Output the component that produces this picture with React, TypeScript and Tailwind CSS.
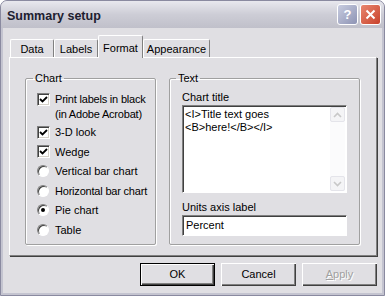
import React from 'react';

const tabs = ['Data', 'Labels', 'Format', 'Appearance'];
const tabWidths: Record<string, string> = {
    Data: 'w-[44px]',
    Labels: 'w-[44px]',
    Format: 'w-[45px]',
    Appearance: 'w-[67px]',
};

const Check = () => (
    <span className="w-[13px] h-[13px] shrink-0 bg-white border border-t-[#808080] border-l-[#808080] border-b-white border-r-white shadow-[inset_1px_1px_0_#404040,inset_-1px_-1px_0_#d4d0c8] flex items-center justify-center">
        <svg width="9" height="9" viewBox="0 0 9 9">
            <path d="M1 4 L3.5 6.5 L8 2" stroke="#000" strokeWidth="1.8" fill="none" />
        </svg>
    </span>
);

const Radio = ({ on }: { on?: boolean }) => (
    <span className="w-[12px] h-[12px] shrink-0 rounded-full bg-white border border-t-[#808080] border-l-[#808080] border-b-white border-r-white shadow-[inset_1px_1px_0_#404040] flex items-center justify-center">
        {on && <span className="w-[4px] h-[4px] rounded-full bg-black" />}
    </span>
);

const ScrollArrow = ({ up }: { up?: boolean }) => (
    <div className="h-[15px] w-[15px] bg-[#f4f4f6] border border-[#e4e4ea] rounded-[2px] flex items-center justify-center">
        <svg width="9" height="6" viewBox="0 0 9 6">
            <path d={up ? 'M1 5 L4.5 1.5 L8 5' : 'M1 1 L4.5 4.5 L8 1'} stroke="#c8c8c8" strokeWidth="1.6" fill="none" />
        </svg>
    </div>
);

const Button = ({ label, primary, disabled }: { label: React.ReactNode; primary?: boolean; disabled?: boolean }) => (
    <div
        className={`w-[75px] h-[23px] flex items-center justify-center bg-[#e0dfe3] ${
            primary
                ? 'border border-black shadow-[inset_1px_1px_0_#fff,inset_-1px_-1px_0_#404040,inset_-2px_-2px_0_#808080]'
                : 'shadow-[inset_1px_1px_0_#fff,inset_-1px_-1px_0_#404040,inset_-2px_-2px_0_#808080]'
        } ${disabled ? 'text-[#a0a0a0] [text-shadow:1px_1px_0_#fff]' : 'text-black'}`}
    >
        {label}
    </div>
);

export default function App() {
    return (
        <div className="w-[385px] h-[296px] flex flex-col bg-[#c4c4d0] border border-[#8a8aa0] rounded-t-[7px] overflow-hidden font-['Liberation_Sans',Arial,sans-serif] text-[11px] text-black">
            {/* Title bar */}
            <div className="h-[27px] shrink-0 flex items-center pl-[6px] pr-[3px] bg-gradient-to-b from-[#e8e8ee] via-[#cdcdd6] to-[#c0c0ca]">
                <span className="font-bold text-[12.5px] text-[#202030] flex-1 pt-[3px]">Summary setup</span>
                <div className="w-[21px] h-[21px] rounded-[3px] border border-white bg-gradient-to-br from-[#c8cce0] to-[#8e94b4] flex items-center justify-center text-white font-bold text-[13px]">?</div>
                <div className="w-[21px] h-[21px] ml-[2px] rounded-[3px] border border-white bg-gradient-to-br from-[#e8866e] to-[#c8402a] flex items-center justify-center">
                    <svg width="11" height="11" viewBox="0 0 11 11">
                        <path d="M1.5 1.5 L9.5 9.5 M9.5 1.5 L1.5 9.5" stroke="#fff" strokeWidth="2" />
                    </svg>
                </div>
            </div>

            {/* Body */}
            <div className="flex-1 mx-[2px] mb-[2px] bg-[#e0dfe3] pl-[6px] pt-[7px] flex flex-col">
                {/* Tabs */}
                <div className="h-[22px] flex items-end pl-[1px] relative z-10">
                    {tabs.map((t) =>
                        t === 'Format' ? (
                            <div key={t} className={`${tabWidths[t]} h-[23px] -mb-[1px] bg-[#e0dfe3] border-t border-l border-white border-r border-r-[#808080] rounded-t-[2px] flex items-start justify-center pt-[4px]`}>
                                {t}
                            </div>
                        ) : (
                            <div key={t} className={`${tabWidths[t]} h-[18px] border-t border-l border-white border-r border-r-[#808080] rounded-t-[2px] flex items-center justify-center pt-[1px]`}>
                                {t}
                            </div>
                        )
                    )}
                </div>

                {/* Panel */}
                <div className="w-[368px] h-[199px] border border-t-white border-l-white border-r-[#808080] border-b-[#808080] shadow-[1px_1px_0_#404040] pl-[15px] pt-[14px] flex gap-[13px]">
                    <fieldset className="w-[131px] h-[173px] border border-[#a0a0a0] shadow-[1px_1px_0_#fff,inset_1px_1px_0_#fff] rounded-[2px] pl-[11px] pt-[7px]">
                        <legend className="-ml-[4px] px-[2px] leading-[13px]">Chart</legend>
                        <div className="flex items-start gap-[5px] h-[30px] whitespace-nowrap">
                            <span className="mt-[1px]"><Check /></span>
                            <span className="leading-[15px] tracking-[-0.2px]">Print labels in black<br />(in Adobe Acrobat)</span>
                        </div>
                        <div className="flex items-center gap-[5px] h-[20px]"><Check /><span>3-D look</span></div>
                        <div className="flex items-center gap-[5px] h-[19.5px]"><Check /><span>Wedge</span></div>
                        <div className="flex items-center gap-[6px] h-[19.5px] whitespace-nowrap"><Radio /><span>Vertical bar chart</span></div>
                        <div className="flex items-center gap-[6px] h-[19.5px] whitespace-nowrap"><Radio /><span className="tracking-[-0.2px]">Horizontal bar chart</span></div>
                        <div className="flex items-center gap-[6px] h-[19.5px]"><Radio on /><span>Pie chart</span></div>
                        <div className="flex items-center gap-[6px] h-[19.5px]"><Radio /><span>Table</span></div>
                    </fieldset>

                    <fieldset className="w-[191px] h-[173px] border border-[#a0a0a0] shadow-[1px_1px_0_#fff,inset_1px_1px_0_#fff] rounded-[2px] pl-[12px] pt-[6px]">
                        <legend className="-ml-[6px] px-[2px] leading-[13px]">Text</legend>
                        <div className="leading-[13px]">Chart title</div>
                        <div className="w-[165px] h-[88px] mt-[1px] bg-white border border-t-[#808080] border-l-[#808080] border-b-white border-r-white shadow-[inset_1px_1px_0_#404040] flex">
                            <div className="flex-1 pl-[2px] pt-[2px] leading-[13px]">
                                &lt;I&gt;Title text goes<br />&lt;B&gt;here!&lt;/B&gt;&lt;/I&gt;
                            </div>
                            <div className="w-[15px] my-[1px] mr-[1px] flex flex-col justify-between bg-[#fbfbfc]">
                                <ScrollArrow up />
                                <ScrollArrow />
                            </div>
                        </div>
                        <div className="leading-[13px] mt-[8px]">Units axis label</div>
                        <div className="w-[165px] h-[21px] mt-[1px] bg-white border border-t-[#808080] border-l-[#808080] border-b-white border-r-white shadow-[inset_1px_1px_0_#404040] pl-[3px] flex items-center">
                            Percent
                        </div>
                    </fieldset>
                </div>

                {/* Buttons */}
                <div className="w-[368px] flex justify-end gap-[6px] mt-[7px]">
                    <Button label="OK" primary />
                    <Button label="Cancel" />
                    <Button label={<span><span className="underline">A</span>pply</span>} disabled />
                </div>
            </div>
        </div>
    );
}
